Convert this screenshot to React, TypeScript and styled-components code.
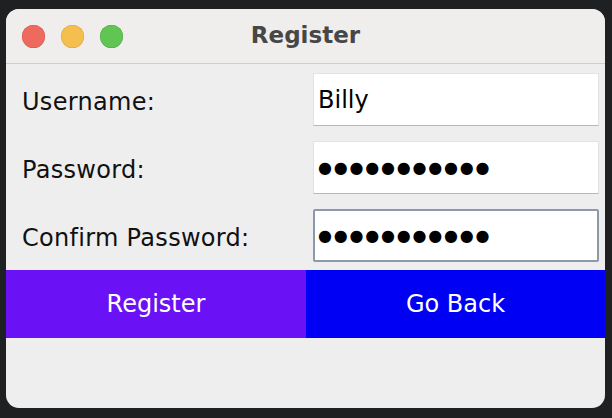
import React from 'react';
import styled, { createGlobalStyle } from 'styled-components';

const GlobalStyle = createGlobalStyle`
  html, body {
    margin: 0;
    padding: 0;
    background: #1f2022;
  }
`;

const fields = [
  { label: 'Username:', value: 'Billy', secret: false, focused: false },
  { label: 'Password:', value: '●●●●●●●●●●●', secret: true, focused: false },
  { label: 'Confirm Password:', value: '●●●●●●●●●●●', secret: true, focused: true },
];

export default function App() {
  return (
    <>
      <GlobalStyle />
      <Page>
        <Window>
          <TitleBar>
            <Lights>
              <Light color="#ee6a5f" edge="#d45a50" />
              <Light color="#f5bf4f" edge="#d9a53f" />
              <Light color="#61c554" edge="#4fae44" />
            </Lights>
            <Title>Register</Title>
          </TitleBar>

          <Form>
            {fields.map((f) => (
              <Row key={f.label}>
                <Label>{f.label}</Label>
                <Field focused={f.focused} secret={f.secret}>
                  {f.value}
                </Field>
              </Row>
            ))}
          </Form>

          <Buttons>
            <Button bg="#6a12f5">Register</Button>
            <Button bg="#0000f5">Go Back</Button>
          </Buttons>
        </Window>
      </Page>
    </>
  );
}

const Page = styled.div`
  width: 612px;
  height: 418px;
  box-sizing: border-box;
  padding: 9px 7px 0 6px;
  font-family: 'DejaVu Sans', 'Liberation Sans', sans-serif;
`;

const Window = styled.div`
  width: 599px;
  height: 399px;
  background: #eeeeee;
  border-radius: 13px;
  overflow: hidden;
  display: flex;
  flex-direction: column;
`;

const TitleBar = styled.div`
  position: relative;
  height: 54px;
  background: #efeeec;
  border-bottom: 1px solid #cfcecd;
  display: flex;
  align-items: center;
  justify-content: center;
`;

const Lights = styled.div`
  position: absolute;
  left: 16px;
  top: 16px;
  display: flex;
  gap: 16px;
`;

const Light = styled.span<{ color: string; edge: string }>`
  width: 23px;
  height: 23px;
  border-radius: 50%;
  background: ${({ color }) => color};
  box-shadow: inset 0 0 0 0.5px ${({ edge }) => edge};
`;

const Title = styled.div`
  font-size: 23px;
  font-weight: bold;
  color: #474747;
  margin-top: -2px;
`;

const Form = styled.div`
  display: flex;
  flex-direction: column;
  gap: 15px;
  padding: 9px 6px 0 16px;
`;

const Row = styled.div`
  display: grid;
  grid-template-columns: 1fr 286px;
  align-items: center;
  height: 53px;
`;

const Label = styled.div`
  font-size: 24px;
  letter-spacing: 0.3px;
  color: #111;
  padding-top: 4px;
`;

const Field = styled.div<{ focused: boolean; secret: boolean }>`
  box-sizing: border-box;
  height: 53px;
  background: #fff;
  display: flex;
  align-items: center;
  padding-left: ${({ focused }) => (focused ? '3px' : '4px')};
  font-size: ${({ secret }) => (secret ? '16px' : '24px')};
  letter-spacing: ${({ secret }) => (secret ? '1.8px' : '0')};
  color: #000;
  border: ${({ focused }) => (focused ? '2px solid #8c99aa' : '1px solid #e2e2e2')};
  border-bottom-color: ${({ focused }) => (focused ? '#8c99aa' : '#b8b8b8')};
  border-radius: ${({ focused }) => (focused ? '2px' : '0')};
`;

const Buttons = styled.div`
  display: grid;
  grid-template-columns: 300px 1fr;
  margin-top: 8px;
  height: 68px;
`;

const Button = styled.button<{ bg: string }>`
  border: none;
  margin: 0;
  background: ${({ bg }) => bg};
  color: #fff;
  font-family: 'DejaVu Sans', 'Liberation Sans', sans-serif;
  font-size: 24px;
  cursor: pointer;
`;
